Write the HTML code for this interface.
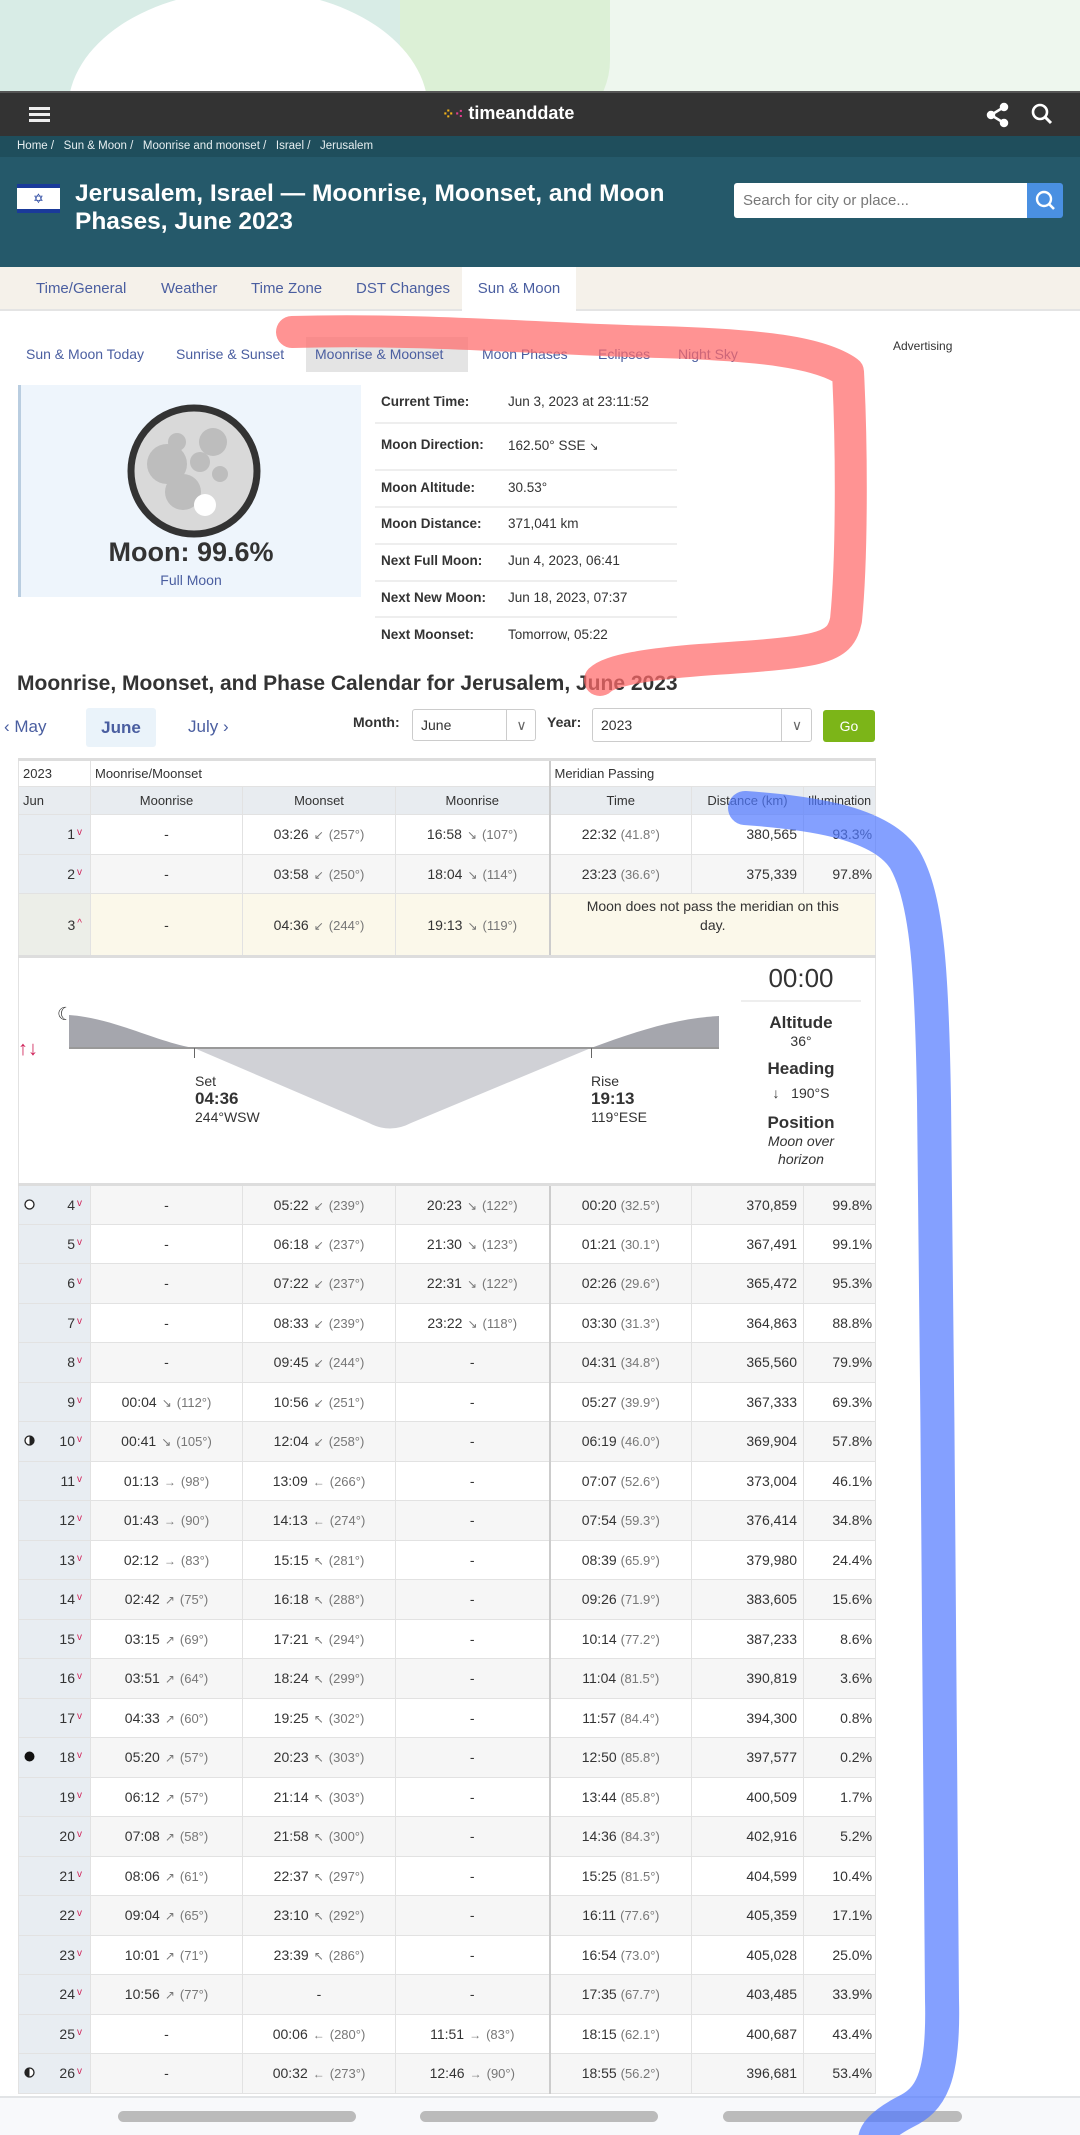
<!DOCTYPE html>
<html><head><meta charset="utf-8">
<style>
*{margin:0;padding:0;box-sizing:border-box}
body{width:1080px;height:2135px;overflow:hidden;background:#fff;font-family:"Liberation Sans",Arial,sans-serif;color:#333;position:relative}
.a{position:absolute}
#tbl{position:absolute;left:18px;top:758px;border-collapse:collapse;table-layout:fixed;width:857px;font-size:14px}
#tbl td,#tbl th{border:1px solid #e2e2e2;text-align:center;white-space:nowrap;overflow:hidden;font-weight:normal}
#tbl th{font-size:13px;color:#333}
#tbl .h1 th{height:27px;text-align:left;padding-left:4px;background:#fff;border-top:3px solid #ddd}
.h2 th{height:28px;background:#e8ecf0}
.r td{height:39.5px}
#tbl .r td.d{background:#e8edf2;text-align:right;padding-right:8px;position:relative;color:#333;overflow:visible}
.r.g td{background:#f6f6f6}
.d i{color:#d0245a;font-style:normal;font-size:10px;vertical-align:4px;margin-left:2px}
.d svg{position:absolute;left:5px;top:13px}
.dg{color:#777;font-size:13px}
.ar{color:#777;font-size:12px;margin:0 5px}
.sep{border-left:2px solid #ccc!important}
.nv{color:#4a5ea0}
</style></head><body>
<div class="a" style="left:0;top:0;width:1080px;height:91px;background:#eef7ee;overflow:hidden">
 <div class="a" style="left:0;top:0;width:420px;height:91px;background:#d8ece6"></div>
 <div class="a" style="left:400px;top:-60px;width:210px;height:200px;background:#dcf0d6;border-radius:0 0 40% 0"></div>
 <div class="a" style="left:68px;top:-10px;width:360px;height:300px;background:#fff;border-radius:50% 50% 0 0/40% 40% 0 0"></div>
</div>
<div class="a" style="left:0;top:91px;width:1080px;height:45px;background:#333;border-top:2px solid #555">
 <div class="a" style="left:29px;top:14px;width:21px;height:3px;background:#eee;box-shadow:0 6px 0 #eee,0 12px 0 #eee"></div>
 <div class="a" style="left:442px;top:10px;font-size:18px;color:#fff;font-weight:bold"><span style="color:#f2b31b;font-size:15px">⁘</span><span style="color:#e23d8e;font-size:15px">⁖</span> timeanddate</div>
 <svg class="a" style="left:985px;top:9px" width="26" height="26" viewBox="0 0 26 26"><g stroke="#fff" stroke-width="2.5" fill="#fff"><line x1="19" y1="5" x2="6" y2="13"/><line x1="6" y1="13" x2="19" y2="21"/><circle cx="19" cy="5" r="3"/><circle cx="6" cy="13" r="3"/><circle cx="19" cy="21" r="3"/></g></svg>
 <svg class="a" style="left:1030px;top:9px" width="24" height="24" viewBox="0 0 24 24"><circle cx="10" cy="10" r="7" stroke="#fff" stroke-width="2.6" fill="none"/><line x1="15" y1="15" x2="21" y2="21" stroke="#fff" stroke-width="3"/></svg>
</div>
<div class="a" style="left:0;top:136px;width:1080px;height:21px;background:#1f4e5c;color:#e6eef0;font-size:11.5px;line-height:21px;padding-left:17px">Home /&nbsp;&nbsp; Sun &amp; Moon /&nbsp;&nbsp; Moonrise and moonset /&nbsp;&nbsp; Israel /&nbsp;&nbsp; Jerusalem</div>
<div class="a" style="left:0;top:157px;width:1080px;height:110px;background:#25596a">
 <div class="a" style="left:17px;top:27px;width:43px;height:29px;background:#fff;border-top:4px solid #1a3a9a;border-bottom:4px solid #1a3a9a;text-align:center;color:#1a3a9a;font-size:13px;line-height:21px">✡</div>
 <div class="a" style="left:75px;top:23px;font-size:24.5px;font-weight:bold;color:#fff;line-height:28px;width:640px">Jerusalem, Israel — Moonrise, Moonset, and Moon Phases, June 2023</div>
 <div class="a" style="left:734px;top:26px;width:293px;height:35px;background:#fff;border-radius:3px 0 0 3px;color:#777;font-size:15px;line-height:35px;padding-left:9px">Search for city or place...</div>
 <div class="a" style="left:1027px;top:26px;width:36px;height:35px;background:#4a90e2;border-radius:0 3px 3px 0"><svg width="36" height="35"><circle cx="17" cy="16" r="7" stroke="#fff" stroke-width="2.4" fill="none"/><line x1="22" y1="21" x2="27" y2="26" stroke="#fff" stroke-width="2.6"/></svg></div>
</div>
<div class="a" style="left:0;top:267px;width:1080px;height:44px;background:#f5f1ea;border-bottom:2px solid #e4e4e4;font-size:15px;line-height:44px">
 <span class="a nv" style="left:36px">Time/General</span>
 <span class="a nv" style="left:161px">Weather</span>
 <span class="a nv" style="left:251px">Time Zone</span>
 <span class="a nv" style="left:356px">DST Changes</span>
 <span class="a nv" style="left:462px;width:114px;background:#fff;text-align:center;height:44px">Sun &amp; Moon</span>
</div>
<div class="a" style="left:306px;top:337px;width:162px;height:35px;background:#e4e4e4"></div>
<div class="a" style="left:0;top:346px;width:760px;font-size:14px">
 <span class="a nv" style="left:26px">Sun &amp; Moon Today</span>
 <span class="a nv" style="left:176px">Sunrise &amp; Sunset</span>
 <span class="a nv" style="left:315px">Moonrise &amp; Moonset</span>
 <span class="a nv" style="left:482px">Moon Phases</span>
 <span class="a nv" style="left:598px">Eclipses</span>
 <span class="a nv" style="left:678px">Night Sky</span>
</div>
<div class="a" style="left:893px;top:339px;font-size:12px">Advertising</div>
<div class="a" style="left:18px;top:385px;width:343px;height:212px;background:#eef5fc;border-left:3px solid #b9cde0">
 <svg class="a" style="left:104px;top:17px" width="138" height="138" viewBox="0 0 138 138">
  <circle cx="69" cy="69" r="63" fill="#d9d9d9" stroke="#333" stroke-width="7"/>
  <g fill="#bdbdbd"><circle cx="42" cy="62" r="20"/><circle cx="58" cy="90" r="18"/><circle cx="88" cy="40" r="14"/><circle cx="75" cy="60" r="10"/><circle cx="95" cy="72" r="8"/><circle cx="52" cy="40" r="9"/></g>
  <circle cx="80" cy="103" r="11" fill="#fff"/>
 </svg>
 <div class="a" style="left:0;top:152px;width:340px;text-align:center;font-size:27px;font-weight:bold">Moon: 99.6%</div>
 <div class="a nv" style="left:0;top:187px;width:340px;text-align:center;font-size:14px">Full Moon</div>
</div>
<div class="a" style="left:375px;top:385px;width:302px;font-size:13.5px">
 <div class="a" style="top:9px;left:6px;font-weight:bold">Current Time:</div><div class="a" style="top:9px;left:133px;width:200px">Jun 3, 2023 at 23:11:52</div>
 <div class="a" style="top:37px;width:302px;border-top:2px solid #eee"></div>
 <div class="a" style="top:52px;left:6px;font-weight:bold">Moon Direction:</div><div class="a" style="top:53px;left:133px;width:200px">162.50° SSE <span style="font-size:11px">↘</span></div>
 <div class="a" style="top:84px;width:302px;border-top:2px solid #eee"></div>
 <div class="a" style="top:95px;left:6px;font-weight:bold">Moon Altitude:</div><div class="a" style="top:95px;left:133px">30.53°</div>
 <div class="a" style="top:121px;width:302px;border-top:2px solid #eee"></div>
 <div class="a" style="top:131px;left:6px;font-weight:bold">Moon Distance:</div><div class="a" style="top:131px;left:133px">371,041 km</div>
 <div class="a" style="top:158px;width:302px;border-top:2px solid #eee"></div>
 <div class="a" style="top:168px;left:6px;font-weight:bold">Next Full Moon:</div><div class="a" style="top:168px;left:133px">Jun 4, 2023, 06:41</div>
 <div class="a" style="top:195px;width:302px;border-top:2px solid #eee"></div>
 <div class="a" style="top:205px;left:6px;font-weight:bold">Next New Moon:</div><div class="a" style="top:205px;left:133px">Jun 18, 2023, 07:37</div>
 <div class="a" style="top:231px;width:302px;border-top:2px solid #eee"></div>
 <div class="a" style="top:242px;left:6px;font-weight:bold">Next Moonset:</div><div class="a" style="top:242px;left:133px">Tomorrow, 05:22</div>
</div>
<div class="a" style="left:17px;top:672px;font-size:21px;font-weight:bold">Moonrise, Moonset, and Phase Calendar for Jerusalem, June 2023</div>
<div class="a nv" style="left:4px;top:717px;font-size:17px">‹ May</div>
<div class="a" style="left:86px;top:708px;width:70px;height:39px;background:#eaf3fa;border-radius:3px;color:#4a5ea0;font-size:17px;font-weight:bold;text-align:center;line-height:39px">June</div>
<div class="a nv" style="left:188px;top:717px;font-size:17px">July ›</div>
<div class="a" style="left:353px;top:714px;font-size:14px;font-weight:bold">Month:</div>
<div class="a" style="left:412px;top:709px;width:124px;height:32px;border:1px solid #ccc;border-radius:3px;font-size:14px;line-height:30px;padding-left:8px">June<span class="a" style="left:93px;top:0;width:30px;height:30px;border-left:1px solid #ccc;text-align:center;color:#666">∨</span></div>
<div class="a" style="left:547px;top:714px;font-size:14px;font-weight:bold">Year:</div>
<div class="a" style="left:592px;top:708px;width:220px;height:34px;border:1px solid #ccc;border-radius:3px;font-size:14px;line-height:32px;padding-left:8px">2023<span class="a" style="left:188px;top:0;width:31px;height:32px;border-left:1px solid #ccc;text-align:center;color:#666">∨</span></div>
<div class="a" style="left:823px;top:710px;width:52px;height:32px;background:#7cb518;border-radius:3px;color:#fff;font-size:14px;text-align:center;line-height:32px">Go</div>

<table id="tbl">
<colgroup><col style="width:72px"><col style="width:152px"><col style="width:153px"><col style="width:154px"><col style="width:142px"><col style="width:112px"><col style="width:72px"></colgroup>
<tr class="h1"><th>2023</th><th colspan="3">Moonrise/Moonset</th><th colspan="3" class="sep">Meridian Passing</th></tr>
<tr class="h2"><th style="text-align:left;padding-left:4px">Jun</th><th>Moonrise</th><th>Moonset</th><th>Moonrise</th><th class="sep">Time</th><th>Distance (km)</th><th style="font-size:12.5px">Illumination</th></tr>
<tbody id="tb"></tbody>
</table>

<div class="a" style="left:0;top:2096px;width:1080px;height:39px;background:#f8f9fb;border-top:2px solid #e2e4e6">
 <div class="a" style="left:118px;top:13px;width:238px;height:11px;border-radius:6px;background:#bbb"></div>
 <div class="a" style="left:420px;top:13px;width:238px;height:11px;border-radius:6px;background:#bbb"></div>
 <div class="a" style="left:723px;top:13px;width:239px;height:11px;border-radius:6px;background:#bbb"></div>
</div>
<svg class="a" style="left:0;top:0" width="1080" height="2135">
 <path d="M292,332 C420,328 560,340 660,342 C760,345 820,352 848,372 C852,450 852,560 846,620 C840,650 820,652 700,660 C650,664 610,670 600,680" stroke="rgba(255,105,105,0.72)" stroke-width="32" fill="none" stroke-linecap="round" stroke-linejoin="round"/>
 <path d="M745,808 C800,812 880,820 905,860 C928,900 932,980 934,1100 C938,1400 940,1800 942,2000 C944,2080 930,2100 905,2112 C880,2125 875,2135 875,2140" stroke="rgba(80,120,255,0.7)" stroke-width="34" fill="none" stroke-linecap="round"/>
</svg>
<script>
var IC={
"full":'<svg width="11" height="11"><circle cx="5.5" cy="5.5" r="4.5" fill="#fff" stroke="#222" stroke-width="1.3"/></svg>',
"fq":'<svg width="11" height="11"><circle cx="5.5" cy="5.5" r="4.5" fill="#fff" stroke="#222" stroke-width="1.3"/><path d="M5.5,1 A4.5,4.5 0 0 0 5.5,10Z" fill="#222"/></svg>',
"new":'<svg width="11" height="11"><circle cx="5.5" cy="5.5" r="5" fill="#111"/></svg>',
"lq":'<svg width="11" height="11"><circle cx="5.5" cy="5.5" r="4.5" fill="#fff" stroke="#222" stroke-width="1.3"/><path d="M5.5,1 A4.5,4.5 0 0 1 5.5,10Z" fill="#222"/></svg>'};
var R=[
[1,"","-","03:26|↙|257","16:58|↘|107","22:32|41.8","380,565","93.3%"],
[2,"","-","03:58|↙|250","18:04|↘|114","23:23|36.6","375,339","97.8%"],
[3],
[4,"full","-","05:22|↙|239","20:23|↘|122","00:20|32.5","370,859","99.8%"],
[5,"","-","06:18|↙|237","21:30|↘|123","01:21|30.1","367,491","99.1%"],
[6,"","-","07:22|↙|237","22:31|↘|122","02:26|29.6","365,472","95.3%"],
[7,"","-","08:33|↙|239","23:22|↘|118","03:30|31.3","364,863","88.8%"],
[8,"","-","09:45|↙|244","-","04:31|34.8","365,560","79.9%"],
[9,"","00:04|↘|112","10:56|↙|251","-","05:27|39.9","367,333","69.3%"],
[10,"lq","00:41|↘|105","12:04|↙|258","-","06:19|46.0","369,904","57.8%"],
[11,"","01:13|→|98","13:09|←|266","-","07:07|52.6","373,004","46.1%"],
[12,"","01:43|→|90","14:13|←|274","-","07:54|59.3","376,414","34.8%"],
[13,"","02:12|→|83","15:15|↖|281","-","08:39|65.9","379,980","24.4%"],
[14,"","02:42|↗|75","16:18|↖|288","-","09:26|71.9","383,605","15.6%"],
[15,"","03:15|↗|69","17:21|↖|294","-","10:14|77.2","387,233","8.6%"],
[16,"","03:51|↗|64","18:24|↖|299","-","11:04|81.5","390,819","3.6%"],
[17,"","04:33|↗|60","19:25|↖|302","-","11:57|84.4","394,300","0.8%"],
[18,"new","05:20|↗|57","20:23|↖|303","-","12:50|85.8","397,577","0.2%"],
[19,"","06:12|↗|57","21:14|↖|303","-","13:44|85.8","400,509","1.7%"],
[20,"","07:08|↗|58","21:58|↖|300","-","14:36|84.3","402,916","5.2%"],
[21,"","08:06|↗|61","22:37|↖|297","-","15:25|81.5","404,599","10.4%"],
[22,"","09:04|↗|65","23:10|↖|292","-","16:11|77.6","405,359","17.1%"],
[23,"","10:01|↗|71","23:39|↖|286","-","16:54|73.0","405,028","25.0%"],
[24,"","10:56|↗|77","-","-","17:35|67.7","403,485","33.9%"],
[25,"","-","00:06|←|280","11:51|→|83","18:15|62.1","400,687","43.4%"],
[26,"fq","-","00:32|←|273","12:46|→|90","18:55|56.2","396,681","53.4%"]];
function ev(s){if(s=="-")return "-";var p=s.split("|");return p[0]+'<span class="ar">'+p[1]+'</span><span class="dg">('+p[2]+'°)</span>';}
var h="";
R.forEach(function(r,i){
 if(r[0]==3){
  h+='<tr class="r"><td class="d" style="background:#eceee8;height:63px">3<i>^</i></td><td style="background:#fbf8ea">-</td><td style="background:#fbf8ea">'+ev("04:36|↙|244")+'</td><td style="background:#fbf8ea">'+ev("19:13|↘|119")+'</td><td colspan="3" class="sep" style="background:#fbf8ea;white-space:normal;font-size:14px;line-height:19px;padding:0 22px;vertical-align:top;padding-top:3px">Moon does not pass the meridian on this day.</td></tr>';
  h+='<tr><td colspan="7" style="height:228px;padding:0;position:relative;border-top:3px solid #ddd;border-bottom:3px solid #ddd;text-align:left">'+
  '<svg style="position:absolute;left:0;top:0" width="857" height="228"><path d="M50,57 C95,60 140,85 176,90 L50,90Z" fill="#a5a6ad"/>'+
  '<path d="M175,90 L350,165 Q371,176 392,165 L572,90Z" fill="#d0d1d6"/>'+
  '<path d="M572,90 C620,72 660,60 700,58 L700,90Z" fill="#a5a6ad"/>'+
  '<rect x="50" y="89" width="650" height="2" fill="#999"/><rect x="175" y="90" width="1" height="10" fill="#666"/><rect x="572" y="90" width="1" height="10" fill="#666"/>'+
  '<text x="38" y="62" font-size="18" fill="#333">☾</text>'+
  '<text x="-1" y="97" font-size="20" fill="#d0245a">↑↓</text></svg>'+
  '<div style="position:absolute;left:176px;top:114px;font-size:14px;line-height:18px">Set<br><b style="font-size:17px">04:36</b><br>244°WSW</div>'+
  '<div style="position:absolute;left:572px;top:114px;font-size:14px;line-height:18px">Rise<br><b style="font-size:17px">19:13</b><br>119°ESE</div>'+
  '<div style="position:absolute;left:722px;top:4px;width:120px;text-align:center;font-size:14px;line-height:18px"><div style="font-size:26px;line-height:32px;border-bottom:2px solid #eee;padding-bottom:6px">00:00</div><div style="font-weight:bold;font-size:17px;margin-top:12px">Altitude</div><div>36°</div><div style="font-weight:bold;font-size:17px;margin-top:10px">Heading</div><div style="margin-top:6px">↓&nbsp;&nbsp; 190°S</div><div style="font-weight:bold;font-size:17px;margin-top:12px">Position</div><div style="font-style:italic">Moon over<br>horizon</div></div></td></tr>';
  return;}
 var g=(r[0]%2==0)?" g":"";
 h+='<tr class="r'+g+'"><td class="d">'+(r[1]?IC[r[1]]:'')+r[0]+'<i>v</i></td><td>'+ev(r[2])+'</td><td>'+ev(r[3])+'</td><td>'+ev(r[4])+'</td>';
 var t=r[5].split("|");
 h+='<td class="sep">'+t[0]+' <span class="dg">('+t[1]+'°)</span></td><td style="text-align:right;padding-right:6px">'+r[6]+'</td><td style="text-align:right;padding-right:3px">'+r[7]+'</td></tr>';
});
document.getElementById("tb").innerHTML=h;
</script>
</body></html>
